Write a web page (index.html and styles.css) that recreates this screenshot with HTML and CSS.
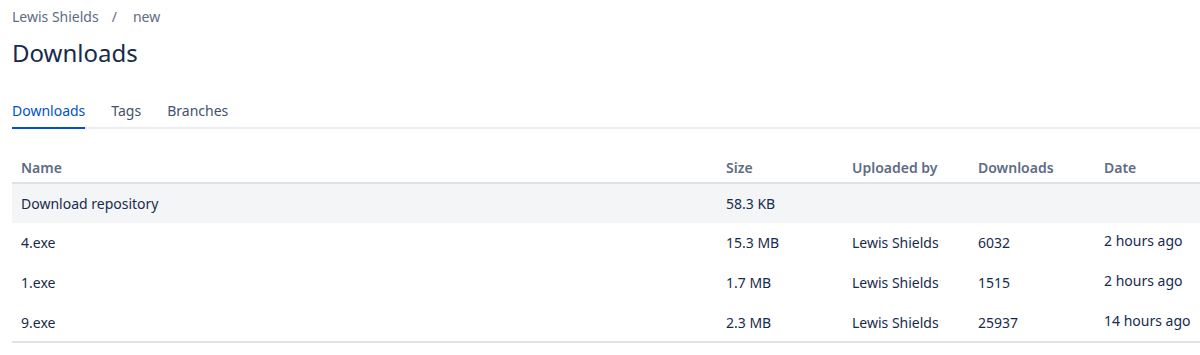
FILE: index.html
```html
<!DOCTYPE html>
<html lang="en">
<head>
    <meta charset="UTF-8">
    <meta name="viewport" content="width=device-width, initial-scale=1.0">
    <title>Downloads</title>
    <link rel="stylesheet" href="styles.css">
</head>
<body>
    <div class="page">
        <div class="breadcrumbs">
            <a href="#">Lewis Shields</a>
            <span class="sep">/</span>
            <a href="#">new</a>
        </div>

        <h1>Downloads</h1>

        <div class="tabs">
            <a href="#" class="active">Downloads</a>
            <a href="#">Tags</a>
            <a href="#">Branches</a>
        </div>

        <table class="downloads">
            <thead>
                <tr>
                    <th class="col-name">Name</th>
                    <th class="col-size">Size</th>
                    <th class="col-user">Uploaded by</th>
                    <th class="col-count">Downloads</th>
                    <th class="col-date">Date</th>
                </tr>
            </thead>
            <tbody>
                <tr class="repo">
                    <td>Download repository</td>
                    <td>58.3 KB</td>
                    <td></td>
                    <td></td>
                    <td></td>
                </tr>
                <tr>
                    <td>4.exe</td>
                    <td>15.3 MB</td>
                    <td>Lewis Shields</td>
                    <td>6032</td>
                    <td class="date">2 hours ago</td>
                </tr>
                <tr>
                    <td>1.exe</td>
                    <td>1.7 MB</td>
                    <td>Lewis Shields</td>
                    <td>1515</td>
                    <td class="date">2 hours ago</td>
                </tr>
                <tr>
                    <td>9.exe</td>
                    <td>2.3 MB</td>
                    <td>Lewis Shields</td>
                    <td>25937</td>
                    <td class="date">14 hours ago</td>
                </tr>
            </tbody>
        </table>
    </div>
</body>
</html>
```

FILE: styles.css
```css
body {
    margin: 0;
    font-family: "Noto Sans", "Open Sans", sans-serif;
    font-size: 14px;
    color: #172b4d;
    background-color: #ffffff;
    overflow: hidden;
}

a {
    color: inherit;
    text-decoration: none;
}

.page {
    padding-left: 12px;
}

.breadcrumbs {
    display: flex;
    gap: 9px;
    padding-top: 7px;
    line-height: 20px;
    color: #5e6c84;
}

.breadcrumbs .sep {
    padding: 0 7px 0 4px;
}

h1 {
    margin: 10px 0 0;
    font-size: 24px;
    font-weight: 400;
    line-height: 32px;
}

.tabs {
    display: flex;
    gap: 26px;
    margin-top: 28px;
    border-bottom: 2px solid #ebecf0;
}

.tabs a {
    color: #42526e;
    line-height: 20px;
    padding: 4px 0 6px;
    margin-bottom: -2px;
    border-bottom: 2px solid transparent;
}

.tabs a.active {
    color: #0052cc;
    border-bottom-color: #0052cc;
}

.downloads {
    width: 1210px;
    margin-top: 20px;
    border-collapse: collapse;
    table-layout: fixed;
}

.downloads th,
.downloads td {
    box-sizing: border-box;
    text-align: left;
    line-height: 20px;
}

.downloads th {
    padding: 9px 9px 4px;
    font-weight: 600;
    color: #5e6c84;
    border-bottom: 2px solid #dfe1e6;
}

.downloads td {
    height: 40px;
    padding: 10px 9px 0;
    vertical-align: top;
}

.downloads td.date {
    padding-top: 8px;
}

.downloads tbody tr:last-child td {
    height: 39px;
    border-bottom: 2px solid #dfe1e6;
}

.downloads tr.repo td {
    background-color: #f4f5f7;
}

.col-name { width: 705px; }
.col-size { width: 126px; }
.col-user { width: 126px; }
.col-count { width: 126px; }
```
